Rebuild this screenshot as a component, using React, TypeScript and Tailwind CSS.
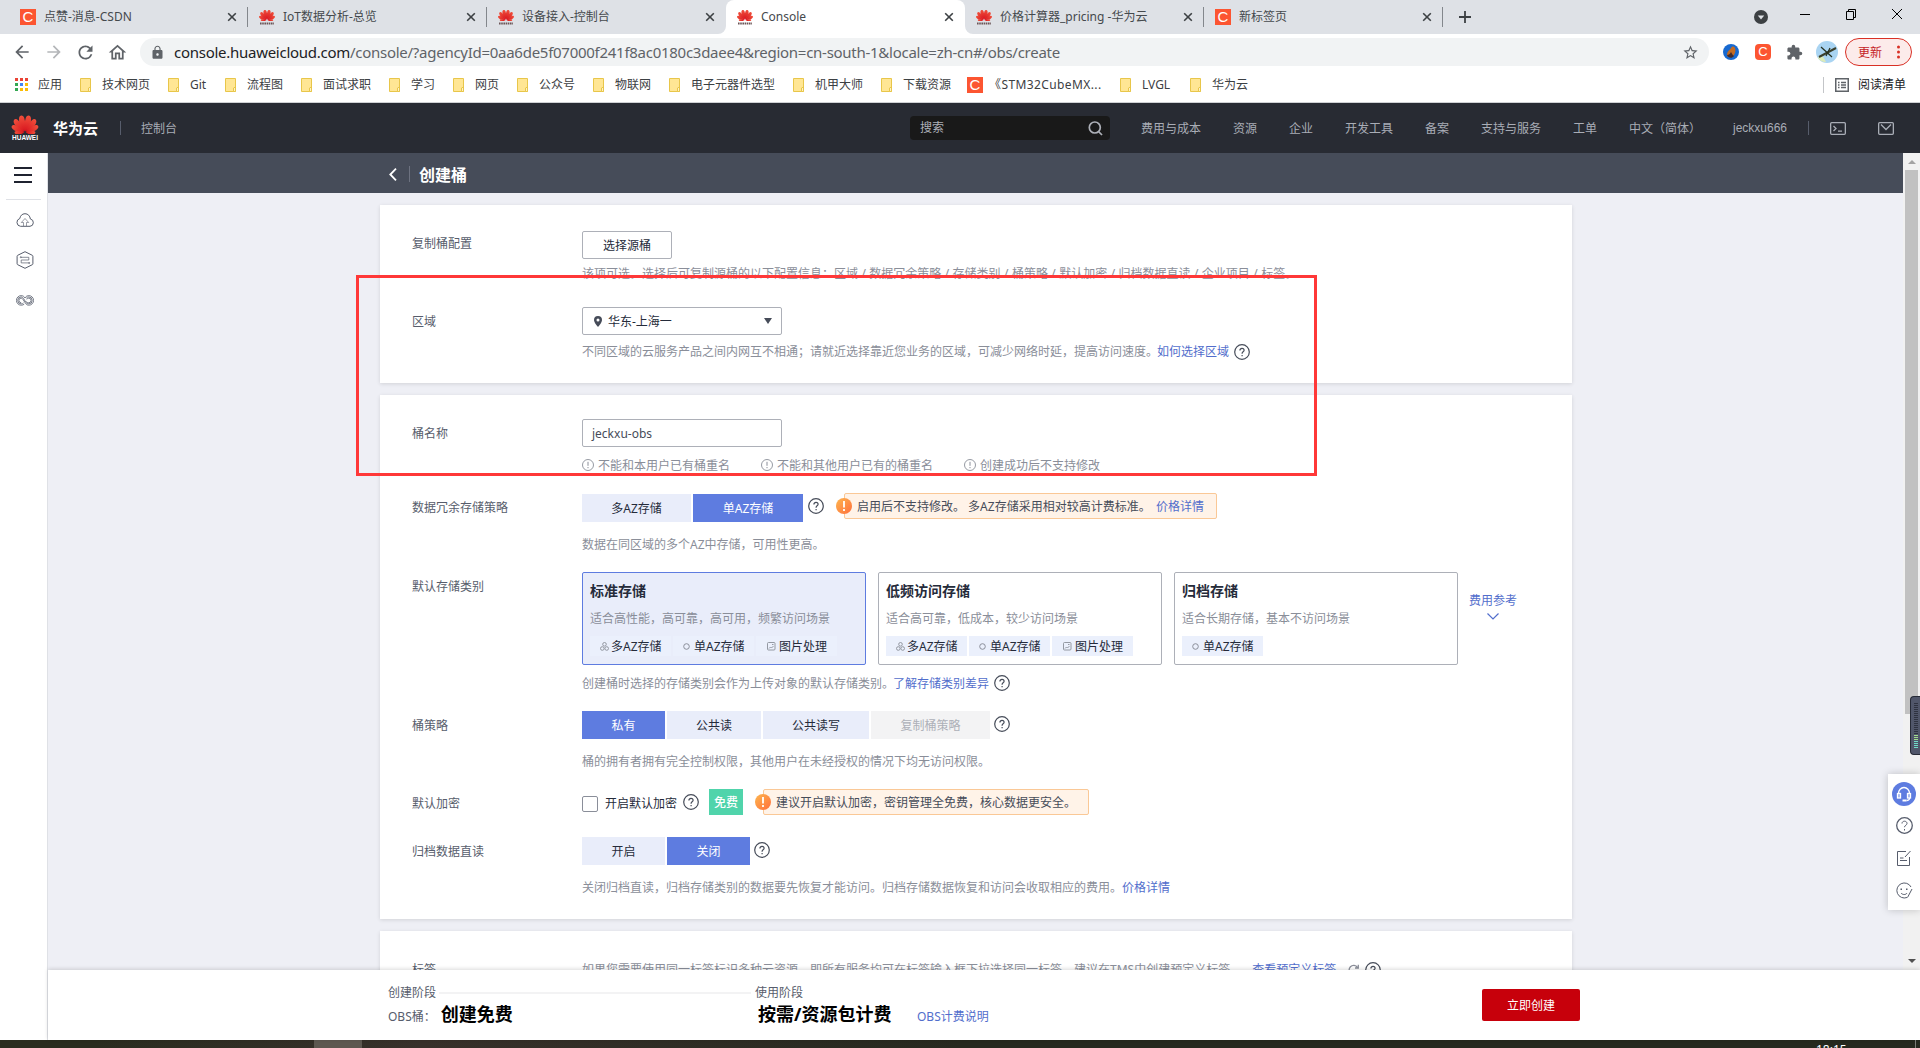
import React from 'react';
import clsx from 'clsx';
import {
  MdArrowBack,
  MdArrowForward,
  MdExtension,
  MdLock,
  MdOutlineHome,
  MdRefresh,
  MdStarBorder,
} from 'react-icons/md';

const tabs = [
  { title: '点赞-消息-CSDN', icon: 'csdn' },
  { title: 'IoT数据分析-总览', icon: 'huawei' },
  { title: '设备接入-控制台', icon: 'huawei' },
  { title: 'Console', icon: 'huawei', active: true },
  { title: '价格计算器_pricing -华为云', icon: 'huawei' },
  { title: '新标签页', icon: 'csdn' },
];

const bookmarks = [
  { title: '技术网页', width: 'w-[48px]' },
  { title: 'Git', width: 'w-[17px]' },
  { title: '流程图', width: 'w-[36px]' },
  { title: '面试求职', width: 'w-[48px]' },
  { title: '学习', width: 'w-[24px]' },
  { title: '网页', width: 'w-[24px]' },
  { title: '公众号', width: 'w-[36px]' },
  { title: '物联网', width: 'w-[36px]' },
  { title: '电子元器件选型', width: 'w-[84px]' },
  { title: '机甲大师', width: 'w-[48px]' },
  { title: '下载资源', width: 'w-[46px]' },
  { title: '《STM32CubeMX...', width: 'w-[113px]', csdn: true },
  { title: 'LVGL', width: 'w-[30px]' },
  { title: '华为云', width: 'w-[36px]' },
];

const menu = ['费用与成本', '资源', '企业', '开发工具', '备案', '支持与服务', '工单', '中文（简体）'];

const storageClasses = [
  { title: '标准存储', desc: '适合高性能，高可靠，高可用，频繁访问场景', tags: ['multi', 'single', 'image'], active: true },
  { title: '低频访问存储', desc: '适合高可靠，低成本，较少访问场景', tags: ['multi', 'single', 'image'] },
  { title: '归档存储', desc: '适合长期存储，基本不访问场景', tags: ['single'] },
];

const petals = [
  { angle: 13, scale: 1 },
  { angle: 39, scale: 0.96 },
  { angle: 64, scale: 0.84 },
  { angle: 90, scale: 0.6 },
];

function HuaweiFlower({ className }: { className?: string }) {
  const petal = 'M0-1C-3.200-6-4.200-10.500-2.700-15C-1.800-18.200 1.900-18.400 2.500-14.500C3-10 1.500-5 0-1z';
  return (
    <svg className={clsx('shrink-0', className)} viewBox="0 0 30 20">
      <defs>
        <linearGradient id="petal" x1="0" y1="0" x2="0" y2="1">
          <stop offset="0" stopColor="#f0503c" />
          <stop offset="1" stopColor="#d8141e" />
        </linearGradient>
      </defs>
      {petals.map((p) => (
        <g key={p.angle} fill="url(#petal)">
          <path d={petal} transform={`translate(15 18.500) rotate(${-p.angle}) scale(${p.scale})`} />
          <path d={petal} transform={`translate(15 18.500) rotate(${p.angle}) scale(${-p.scale} ${p.scale})`} />
        </g>
      ))}
    </svg>
  );
}

function CsdnIcon() {
  return (
    <span className="flex h-4 w-4 shrink-0 items-center justify-center bg-[#fc5531] font-['Liberation_Sans'] text-[15px] leading-4 text-white">
      C
    </span>
  );
}

function HuaweiFavicon() {
  return (
    <span className="flex h-4 w-4 shrink-0 flex-col items-center">
      <HuaweiFlower className="h-[12px] w-[18px]" />
      <svg className="mt-px" width="14" height="3" viewBox="0 0 14 3">
        <path d="M0 1.500H14" stroke="#6b5557" strokeWidth="2" strokeDasharray="1.6 .6" />
      </svg>
    </span>
  );
}

function TabStrip() {
  return (
    <div className="flex h-[34px] shrink-0 bg-[#dee1e6] pl-[9px] text-[12px] text-[#45494d]">
      {tabs.map((tab, i) => (
        <div
          key={tab.title}
          className={clsx(
            'relative flex w-[239px] items-center pl-[11px]',
            tab.active && 'rounded-t-lg bg-white',
          )}
        >
          {tab.icon === 'csdn' ? <CsdnIcon /> : <HuaweiFavicon />}
          <span className="ml-2 flex-1 whitespace-nowrap leading-[36px]">{tab.title}</span>
          <svg className="mr-[11px]" width="10" height="10" viewBox="0 0 10 10" stroke="#3c4043" strokeWidth="1.6">
            <path d="M1.2 1.2l7.6 7.6M8.8 1.2L1.2 8.8" />
          </svg>
          {i !== 2 && i !== 3 && <span className="absolute right-0 top-[7px] h-5 w-px bg-[#83878c]" />}
          {tab.active && (
            <>
              <svg className="absolute -left-2 bottom-0" width="8" height="8" viewBox="0 0 8 8">
                <path d="M8 0v8H0a8 8 0 0 0 8-8z" fill="#fff" />
              </svg>
              <svg className="absolute -right-2 bottom-0" width="8" height="8" viewBox="0 0 8 8">
                <path d="M0 0v8h8a8 8 0 0 1-8-8z" fill="#fff" />
              </svg>
            </>
          )}
        </div>
      ))}
      <svg className="ml-4 mt-[11px]" width="12" height="12" viewBox="0 0 12 12" stroke="#3c4043" strokeWidth="1.8">
        <path d="M6 0v12M0 6h12" />
      </svg>
      <div className="ml-auto flex items-start text-black">
        <svg className="mr-8 mt-[10px]" width="14" height="14" viewBox="0 0 14 14">
          <circle cx="7" cy="7" r="7" fill="#3c4043" />
          <path d="M3.8 5.4h6.4L7 9.6z" fill="#dee1e6" />
        </svg>
        <svg className="mr-9 mt-[9px]" width="10" height="11" viewBox="0 0 10 11" stroke="currentColor">
          <path d="M0 5.5h10" />
        </svg>
        <svg className="mr-9 mt-[9px]" width="10" height="11" viewBox="0 0 10 11" fill="none" stroke="currentColor">
          <path d="M.5 2.5h7v8h-7zM2.5 2.500V.5h7v8h-2" />
        </svg>
        <svg className="mr-[18px] mt-[9px]" width="10" height="10" viewBox="0 0 10 10" stroke="currentColor">
          <path d="M0 0l10 10M10 0L0 10" />
        </svg>
      </div>
    </div>
  );
}

function Toolbar() {
  return (
    <div className="flex h-9 shrink-0 items-center bg-white pl-3 text-[#5f6368]">
      <MdArrowBack size={20} />
      <MdArrowForward size={20} className="ml-3 text-[#b4b6b9]" />
      <MdRefresh size={21} className="ml-[11px]" />
      <MdOutlineHome size={21} className="ml-[11px]" />
      <div className="ml-3 flex h-7 w-[1569px] items-center rounded-full bg-[#f1f3f4] pl-[10px] pr-[10px]">
        <MdLock size={15} />
        <span className="ml-[9px] flex-1 whitespace-nowrap text-[15px] tracking-[-0.27px]">
          <span className="text-[#202124]">console.huaweicloud.com</span>
          /console/?agencyId=0aa6de5f07000f241f8ac0180c3daee4&amp;region=cn-south-1&amp;locale=zh-cn#/obs/create
        </span>
        <MdStarBorder size={17} />
      </div>
      <svg className="ml-[14px]" width="16" height="16" viewBox="0 0 16 16">
        <circle cx="8" cy="8" r="8" fill="#1769d0" />
        <path d="M4 11C4 7 7 6 8 4c1-2 3-2 4 0 1 3 0 5-1 7-2 3-6 3-7 0z" fill="#c46b22" />
        <path d="M4 11c2 0 3-1 4-3 1 2 2 3 3 4-2 3-6 2-7-1z" fill="#472c2a" />
      </svg>
      <span className="ml-4 flex h-4 w-4 items-center justify-center rounded-sm bg-[#fc5531] font-['Liberation_Sans'] text-[13px] leading-4 text-white">
        C
      </span>
      <MdExtension size={17} className="ml-[15px]" />
      <svg className="ml-[13px]" width="22" height="22" viewBox="0 0 22 22">
        <circle cx="11" cy="11" r="11" fill="#a9d4f2" />
        <path d="M2 17c3-6 6 0 8 4-4 0-7-2-8-4z" fill="#dcebb8" />
        <path d="M3 16L20 7" stroke="#3a3f2c" strokeWidth="2" />
        <path d="M5 6l11 10M10 15l4-8" stroke="#25301f" strokeWidth="1.200" />
      </svg>
      <div className="ml-[7px] flex h-7 w-[67px] items-center rounded-full border border-[#d93025] bg-[#fcebea] pl-3 text-[12px] text-[#c5221f]">
        <span className="mt-px">更新</span>
        <svg className="ml-[15px]" width="3" height="14" viewBox="0 0 3 14" fill="#d93025">
          <circle cx="1.500" cy="2" r="1.5" />
          <circle cx="1.500" cy="7" r="1.5" />
          <circle cx="1.500" cy="12" r="1.5" />
        </svg>
      </div>
    </div>
  );
}

function AppsIcon() {
  const colors = ['#ea4335', '#ea4335', '#ea4335', '#34a853', '#4285f4', '#fbbc04', '#34a853', '#fbbc04', '#fbbc04'];
  return (
    <svg width="13" height="13" viewBox="0 0 13 13">
      {colors.map((color, i) => (
        <rect key={i} x={(i % 3) * 5} y={Math.floor(i / 3) * 5} width="3" height="3" fill={color} />
      ))}
    </svg>
  );
}

function BookmarksBar() {
  return (
    <div className="flex h-[33px] shrink-0 items-center border-b border-[#cfd1d4] bg-white pb-[3px] pl-[15px] text-[12px] text-[#3c4043]">
      <AppsIcon />
      <span className="ml-[10px] w-[42px]">应用</span>
      {bookmarks.map((b) => (
        <div key={b.title} className="flex items-center">
          {b.csdn ? (
            <CsdnIcon />
          ) : (
            <svg width="11" height="14" viewBox="0 0 11 14">
              <path d="M.5.500h10v13H.5z" fill="#ffe694" stroke="#e8c64a" />
              <path d="M8.500 13.500v-3.500l2-1v4.500z" fill="#fff3c4" stroke="#e8c64a" />
            </svg>
          )}
          <span className={clsx('mr-[18px] whitespace-nowrap', b.csdn ? 'ml-[6px] tracking-[0.4px]' : 'ml-[11px]', b.width)}>
            {b.title}
          </span>
        </div>
      ))}
      <div className="ml-auto flex items-center pr-[14px]">
        <span className="h-4 w-px bg-[#c3c5c8]" />
        <svg className="ml-[11px] mr-[9px]" width="14" height="14" viewBox="0 0 14 14" fill="none" stroke="#5f6368">
          <rect x=".75" y=".75" width="12.5" height="12.5" strokeWidth="1.5" />
          <path d="M3 4.500h1.500M3 7h1.500M3 9.500h1.500M6 4.500h5M6 7h5M6 9.500h5" strokeWidth="1.300" />
        </svg>
        <span className="text-[#202124]">阅读清单</span>
      </div>
    </div>
  );
}

function ConsoleHeader() {
  return (
    <div className="flex h-[50px] shrink-0 items-center bg-[#282b33] pl-3 text-[12px] text-[#a9adb6]">
      <div className="flex w-[26px] flex-col items-center">
        <HuaweiFlower className="h-[20px] w-[30px]" />
        <span className="font-['Liberation_Sans'] text-[6.500px] font-bold leading-[8px] text-white">HUAWEI</span>
      </div>
      <span className="ml-[15px] text-[15px] font-bold text-white">华为云</span>
      <span className="ml-[22px] h-[14px] w-px bg-[#575d6c]" />
      <span className="ml-5 mt-px">控制台</span>
      <div className="ml-auto flex h-6 w-[200px] items-center justify-between rounded-sm bg-[#191919] pl-[10px] pr-[7px] text-[#adb0b8]">
        搜索
        <svg width="15" height="15" viewBox="0 0 15 15" fill="none" stroke="currentColor" strokeWidth="1.700">
          <circle cx="6.800" cy="6.500" r="5.500" />
          <path d="M10.500 10.500l3.500 3.500" />
        </svg>
      </div>
      <nav className="ml-[31px] mt-[2px] flex gap-8 whitespace-nowrap">
        {menu.map((m) => (
          <span key={m}>{m}</span>
        ))}
        <span className="w-[54px] font-['Liberation_Sans'] leading-[16px]">jeckxu666</span>
      </nav>
      <span className="ml-[21px] mr-[21px] h-[14px] w-px bg-[#575d6c]" />
      <svg className="mr-8" width="16" height="13" viewBox="0 0 16 13" fill="none" stroke="currentColor" strokeWidth="1.300">
        <rect x=".65" y=".65" width="14.700" height="11.700" rx="1" />
        <path d="M3.500 4l2.500 2.500L3.500 9M8 9.200h4" />
      </svg>
      <svg className="mr-[26px]" width="16" height="13" viewBox="0 0 16 13" fill="none" stroke="currentColor" strokeWidth="1.300">
        <rect x=".65" y=".65" width="14.700" height="11.700" rx="1" />
        <path d="M3 2.500l5 5 5-5" />
      </svg>
    </div>
  );
}

function Sidebar() {
  return (
    <aside className="flex w-12 shrink-0 flex-col border-r border-[#dfe1e6] bg-white">
      <svg className="ml-[14px] mt-[14px]" width="18" height="16" viewBox="0 0 18 16" stroke="#1f2330" strokeWidth="2">
        <path d="M0 1h18M0 8h18M0 15h18" />
      </svg>
      <span className="ml-[6px] mt-4 h-px w-[35px] bg-[#dfe1e6]" />
      <svg className="ml-4 mt-[13px]" width="18" height="14" viewBox="0 0 18 14" fill="none" stroke="#575d6c">
        <path d="M4.500 13.300h9.500a3.700 3.700 0 0 0 .4-7.300C14 3 12 .700 9 .700S4.200 3 3.800 5.500a4 4 0 0 0 .7 7.800z" />
        <path d="M7.500 13V9.500H5.300L9 5.500l3.700 4h-2.200V13" strokeWidth=".6" />
      </svg>
      <svg className="ml-4 mt-6" width="18" height="18" viewBox="0 0 18 18" fill="none" stroke="#575d6c">
        <path d="M9 .700l7.300 3.600a1 1 0 0 1 .6.9v7.600a1 1 0 0 1-.6.900L9 17.300l-7.300-3.600a1 1 0 0 1-.6-.9V5.200a1 1 0 0 1 .6-.9z" />
        <path d="M4.500 6.300h8.300v2.700H5.200v2.900h8.300" strokeWidth=".7" />
        <circle cx="4.800" cy="6.200" r=".6" strokeWidth=".6" />
        <circle cx="13.200" cy="12" r=".6" strokeWidth=".6" />
      </svg>
      <svg className="ml-4 mt-[26px]" width="18" height="11" viewBox="0 0 18 11" fill="none" stroke="#575d6c" strokeWidth=".8">
        <path d="M9 3C8 1.300 6.800.600 5.200.600a4.700 4.700 0 1 0 0 9.600c1.300 0 2.300-.4 3-1M9 3c1-1.700 2.200-2.400 3.800-2.400a4.700 4.700 0 1 1 0 9.600c-2 0-3-1.200-4-3L7 4.500c-.5-.8-1-1.400-1.800-1.400a2.300 2.300 0 1 0 0 4.600" />
        <path d="M10 7.500L7.700 3.700C7 2.600 6.300 1.900 5.200 1.900a3.500 3.500 0 1 0 0 7c1 0 1.800-.4 2.300-1M10.500 6.500c.6 1 1.200 1.300 2.200 1.300a2.300 2.300 0 1 0 0-4.700c-1 0-1.500.7-1.900 1.300M10.300 3.200c.7-.8 1.300-1.300 2.400-1.300a3.500 3.500 0 1 1 0 7c-1.200 0-2-.5-2.700-1.400" />
      </svg>
    </aside>
  );
}

function Help({ className }: { className?: string }) {
  return (
    <svg className={clsx('shrink-0', className)} width="16" height="16" viewBox="0 0 16 16" fill="none" stroke="#464c59" strokeWidth="1.200">
      <circle cx="8" cy="8" r="7.300" />
      <path d="M5.900 6.500c0-1.300.9-2.100 2.100-2.100s2.100.8 2.100 1.900c0 1.400-2 1.600-2 3.100v.4M8.100 11v1.300" />
    </svg>
  );
}

function Row({
  label,
  className,
  labelClass = 'leading-[29px]',
  children,
}: {
  label: string;
  className: string;
  labelClass?: string;
  children: React.ReactNode;
}) {
  return (
    <div className={clsx('flex whitespace-nowrap', className)}>
      <div className={clsx('w-[170px] shrink-0 text-[#575d6c]', labelClass)}>{label}</div>
      <div className="min-w-0 flex-1">{children}</div>
    </div>
  );
}

function Segment({ width, state, children }: { width: string; state?: 'on' | 'off'; children: React.ReactNode }) {
  return (
    <span
      className={clsx(
        'h-7 text-center leading-[29px]',
        width,
        state === 'on' && 'bg-[#5e7ce0] text-white',
        state === 'off' && 'bg-[#f3f3f4] text-[#adb0b8]',
        !state && 'bg-[#e9edfa] text-[#252b3a]',
      )}
    >
      {children}
    </span>
  );
}

function Tip({ className, children }: { className?: string; children: React.ReactNode }) {
  return (
    <div className={clsx('relative h-[26px] rounded-xs border border-[#fac896] bg-[#fff3e8] pl-[12px] leading-[25px] text-[#464c59]', className)}>
      <svg className="absolute -left-[9px] top-1" width="16" height="16" viewBox="0 0 16 16">
        <defs>
          <linearGradient id="warn" x1="0" y1="0" x2="1" y2="1">
            <stop offset="0" stopColor="#fdb64f" />
            <stop offset="1" stopColor="#ff6f3c" />
          </linearGradient>
        </defs>
        <circle cx="8" cy="8" r="8" fill="url(#warn)" />
        <path d="M8 3v6.500M8 11v2" stroke="#fff" strokeWidth="1.800" />
      </svg>
      {children}
    </div>
  );
}

function Link({ children, className }: { children: React.ReactNode; className?: string }) {
  return <a className={clsx('text-[#526ecc]', className)}>{children}</a>;
}

function Notice({ children }: { children: string }) {
  return (
    <span className="mr-[31px] flex items-center">
      <svg className="mb-[3px] mr-1" width="12" height="12" viewBox="0 0 12 12" fill="none" stroke="#8a8e99">
        <circle cx="6" cy="6" r="5.500" strokeWidth=".9" />
        <path d="M6 2.800v4M6 8v1.200" />
      </svg>
      {children}
    </span>
  );
}

function StorageTag({ type }: { type: string }) {
  return (
    <span className="flex h-5 w-[81px] items-center bg-[#ebf0fc] pl-[10px] leading-[21px] text-[#252b3a]">
      {type === 'multi' && (
        <svg className="mr-[2px]" width="9" height="9" viewBox="0 0 9 9" fill="none" stroke="#8a8e99" strokeWidth=".9">
          <circle cx="4.500" cy="2.300" r="1.800" />
          <circle cx="2.300" cy="6.500" r="1.800" />
          <circle cx="6.700" cy="6.500" r="1.800" />
        </svg>
      )}
      {type === 'single' && (
        <svg className="mr-[4px]" width="7" height="7" viewBox="0 0 7 7" fill="none" stroke="#8a8e99">
          <circle cx="3.500" cy="3.500" r="2.800" />
        </svg>
      )}
      {type === 'image' && (
        <svg className="ml-px mr-[3px]" width="9" height="9" viewBox="0 0 9 9" fill="none" stroke="#8a8e99" strokeWidth=".9">
          <rect x=".5" y=".5" width="7.500" height="7.500" rx="1" />
          <path d="M2 6.500l1.500-1.500 1 1L6.500 4M5 2.500h1.500" />
        </svg>
      )}
      <span className="mt-px">{type === 'multi' ? '多AZ存储' : type === 'single' ? '单AZ存储' : '图片处理'}</span>
    </span>
  );
}

function BucketForm() {
  return (
    <div className="ml-[332px] mt-3 flex w-[1192px] flex-col gap-3 text-[12px]">
      <section className="h-[178px] bg-white pl-8 pt-[26px] shadow-[0_1px_4px_rgba(0,0,0,0.12)]">
        <Row label="复制桶配置" className="h-[76px]" labelClass="leading-[26px]">
          <button className="block h-7 w-[90px] rounded-xs border border-[#adb0b8] text-center leading-[27px] text-[#252b3a]">
            选择源桶
          </button>
          <p className="mt-[6px] leading-[18px] text-[#8a8e99] [word-spacing:0.3px]">
            该项可选。选择后可复制源桶的以下配置信息：区域 / 数据冗余策略 / 存储类别 / 桶策略 / 默认加密 / 归档数据直读 / 企业项目 / 标签。
          </p>
        </Row>
        <Row label="区域" className="h-[76px]">
          <div className="flex h-7 w-[200px] items-center rounded-xs border border-[#adb0b8] pl-[11px] pr-[9px] text-[#252b3a]">
            <svg className="mr-[6px]" width="8" height="11" viewBox="0 0 8 11">
              <path d="M4 0a4 4 0 0 0-4 4c0 2.700 4 7 4 7s4-4.300 4-7a4 4 0 0 0-4-4zm0 2.500a1.500 1.500 0 1 1 0 3 1.500 1.500 0 0 1 0-3z" fill="#464c59" />
            </svg>
            <span className="mt-[2px] flex-1">华东-上海一</span>
            <svg className="mb-px" width="8" height="6" viewBox="0 0 8 6">
              <path d="M0 0h8L4 6z" fill="#464c59" />
            </svg>
          </div>
          <p className="mt-[8px] flex items-center leading-[18px] text-[#8a8e99]">
            不同区域的云服务产品之间内网互不相通；请就近选择靠近您业务的区域，可减少网络时延，提高访问速度。
            <Link className="-ml-px">如何选择区域</Link>
            <Help className="mb-px ml-[5px]" />
          </p>
        </Row>
      </section>

      <section className="h-[524px] bg-white pl-8 pt-6 shadow-[0_1px_4px_rgba(0,0,0,0.12)]">
        <Row label="桶名称" className="h-[75px]">
          <div className="h-7 w-[200px] rounded-xs border border-[#adb0b8] pl-[9px] leading-[27px] text-[#464c59]">
            jeckxu-obs
          </div>
          <p className="mt-[10px] flex leading-[18px] text-[#8a8e99]">
            <Notice>不能和本用户已有桶重名</Notice>
            <Notice>不能和其他用户已有的桶重名</Notice>
            <Notice>创建成功后不支持修改</Notice>
          </p>
        </Row>
        <Row label="数据冗余存储策略" className="h-[78px]" labelClass="leading-[27px]">
          <div className="flex h-7 items-start gap-[2px]">
            <Segment width="w-[109px]">多AZ存储</Segment>
            <Segment width="w-[110px]" state="on">单AZ存储</Segment>
            <Help className="ml-[3px] mt-1" />
            <Tip className="-mt-px ml-[18px] w-[373px]">
              <span className="inline-block w-[299px]">启用后不支持修改。 多AZ存储采用相对较高计费标准。</span>
              <Link>价格详情</Link>
            </Tip>
          </div>
          <p className="mt-[14px] leading-[18px] text-[#8a8e99]">数据在同区域的多个AZ中存储，可用性更高。</p>
        </Row>
        <Row label="默认存储类别" className="h-[139px]">
          <div className="flex gap-3">
            {storageClasses.map((s) => (
              <div
                key={s.title}
                className={clsx(
                  'h-[93px] w-[284px] rounded-xs border pl-[7px] pt-[9px]',
                  s.active ? 'border-[#5e7ce0] bg-[#e9edfa]' : 'border-[#adb0b8]',
                )}
              >
                <h3 className="text-[14px] font-bold leading-[18px] text-[#252b3a]">{s.title}</h3>
                <p className="mt-[10px] leading-[18px] text-[#8a8e99]">{s.desc}</p>
                <div className="mt-[8px] flex gap-[2px]">
                  {s.tags.map((t) => (
                    <StorageTag key={t} type={t} />
                  ))}
                </div>
              </div>
            ))}
            <div className="-ml-px flex flex-col items-center pt-[20px] leading-[18px]">
              <Link>费用参考</Link>
              <svg className="mt-[3px]" width="12" height="7" viewBox="0 0 12 7" fill="none" stroke="#526ecc" strokeWidth="1.200">
                <path d="M.5.500L6 6l5.500-5.500" />
              </svg>
            </div>
          </div>
          <p className="mt-[10px] flex items-center leading-[18px] text-[#8a8e99]">
            创建桶时选择的存储类别会作为上传对象的默认存储类别。
            <Link className="-ml-px">了解存储类别差异</Link>
            <Help className="mb-[2px] ml-[5px]" />
          </p>
        </Row>
        <Row label="桶策略" className="h-[78px]">
          <div className="flex items-start gap-[2px]">
            <Segment width="w-[83px]" state="on">私有</Segment>
            <Segment width="w-[94px]">公共读</Segment>
            <Segment width="w-[106px]">公共读写</Segment>
            <Segment width="w-[119px]" state="off">复制桶策略</Segment>
            <Help className="ml-[2px] mt-[5px]" />
          </div>
          <p className="mt-[14px] leading-[18px] text-[#8a8e99]">桶的拥有者拥有完全控制权限，其他用户在未经授权的情况下均无访问权限。</p>
        </Row>
        <Row label="默认加密" className="h-[48px]">
          <div className="flex h-[26px] items-center">
            <span className="mt-1 h-4 w-4 rounded-xs border border-[#8a8e99] bg-white" />
            <span className="ml-[7px] mt-[4px] text-[#252b3a]">开启默认加密</span>
            <Help className="ml-[6px]" />
            <span className="ml-[10px] h-[26px] w-[34px] bg-[#50d4ab] text-center font-medium leading-[27px] text-white">免费</span>
            <Tip className="ml-5 w-[326px]">建议开启默认加密，密钥管理全免费，核心数据更安全。</Tip>
          </div>
        </Row>
        <Row label="归档数据直读" className="h-[82px]">
          <div className="flex items-start gap-[2px]">
            <Segment width="w-[83px]">开启</Segment>
            <Segment width="w-[83px]" state="on">关闭</Segment>
            <Help className="ml-[2px] mt-[5px]" />
          </div>
          <p className="mt-[14px] leading-[18px] text-[#8a8e99]">
            关闭归档直读，归档存储类别的数据要先恢复才能访问。归档存储数据恢复和访问会收取相应的费用。
            <Link>价格详情</Link>
          </p>
        </Row>
      </section>

      <section className="h-[120px] bg-white pl-8 pt-6 shadow-[0_1px_4px_rgba(0,0,0,0.12)]">
        <Row label="标签" className="h-8">
          <div className="flex items-center leading-[29px] text-[#8a8e99]">
            如果您需要使用同一标签标识多种云资源，即所有服务均可在标签输入框下拉选择同一标签，建议在TMS中创建预定义标签。
            <Link className="ml-[10px]">查看预定义标签</Link>
            <svg className="ml-3" width="11" height="12" viewBox="0 0 11 12" fill="none" stroke="#8a8e99" strokeWidth="1.300">
              <path d="M9.500 3.500A4.500 4.500 0 1 0 10 7M10.300.800v3.200H7" />
            </svg>
            <Help className="ml-[6px]" />
          </div>
        </Row>
      </section>
    </div>
  );
}

function Scrollbar() {
  return (
    <div className="flex w-[17px] shrink-0 flex-col items-center bg-[#f1f1f1]">
      <svg className="mt-[7px]" width="8" height="4" viewBox="0 0 8 4">
        <path d="M0 4h8L4 0z" fill="#a3a3a3" />
      </svg>
      <div className="mt-[6px] h-[544px] w-[13px] bg-[#c1c1c1]" />
      <svg className="mb-[7px] mt-auto" width="8" height="4" viewBox="0 0 8 4">
        <path d="M0 0h8L4 4z" fill="#505050" />
      </svg>
    </div>
  );
}

function Footer() {
  return (
    <footer className="relative flex h-[70px] shrink-0 bg-white pl-[340px] text-[12px] shadow-[0_-1px_4px_rgba(0,0,0,0.15)]">
      <div className="w-[367px] pt-[14px]">
        <div className="flex items-center leading-[18px] text-[#575d6c]">
          创建阶段
          <span className="ml-[3px] h-[2px] w-[312px] bg-[#f3f3f4]" />
        </div>
        <div className="-mt-px flex items-baseline leading-[27px] text-[#575d6c]">
          OBS桶：<strong className="ml-[5px] text-[18px] text-black">创建免费</strong>
        </div>
      </div>
      <div className="pt-[14px]">
        <div className="leading-[18px] text-[#575d6c]">使用阶段</div>
        <div className="-mt-px flex items-baseline pl-[3px] leading-[27px]">
          <strong className="w-[159px] text-[18px] text-black">按需/资源包计费</strong>
          <Link>OBS计费说明</Link>
        </div>
      </div>
      <button className="ml-auto mr-[340px] mt-[19px] h-8 w-[98px] rounded-xs bg-[#c7000b] pt-px text-white">立即创建</button>
    </footer>
  );
}

function ServicePanel() {
  return (
    <div className="absolute right-0 top-[774px] flex h-[136px] w-8 flex-col items-center bg-white pt-2 shadow-[0_0_8px_rgba(0,0,0,0.2)]">
      <svg width="24" height="24" viewBox="0 0 24 24" fill="none" stroke="#fff" strokeWidth="1.300">
        <circle cx="12" cy="12" r="12" fill="#5e7ce0" stroke="none" />
        <path d="M6.500 11.500a5.500 6 0 0 1 11 0M17.500 16c0 2-1.500 2.500-3 2.500" />
        <rect x="5.500" y="11.500" width="3" height="4.500" fill="#9db1ee" />
        <rect x="15.500" y="11.500" width="3" height="4.500" fill="#9db1ee" />
        <path d="M10.500 18.500h4" strokeWidth="2" />
      </svg>
      <svg className="mt-[11px]" width="17" height="17" viewBox="0 0 17 17" fill="none" stroke="#575d6c">
        <circle cx="8.500" cy="8.500" r="7.800" strokeWidth="1.300" />
        <path d="M6 6.500c0-1.300 1-2.300 2.500-2.300S11 5.200 11 6.500c0 1.700-2.500 1.800-2.500 3.700M8.500 12v1.500" />
      </svg>
      <svg className="mt-[16px]" width="16" height="17" viewBox="0 0 16 17" fill="none" stroke="#575d6c">
        <path d="M10 1.500H1.500v14h12V7M9 7l5.500-6M4 8h3.500M4 10.500h7" />
      </svg>
      <svg className="mt-[15px]" width="17" height="17" viewBox="0 0 17 17" fill="none" stroke="#575d6c">
        <path d="M15 5A7.500 7.500 0 1 0 11 15.500M16 7l-4.500 8.500M5 11c1.500 2 5 2 6 0" />
        <path d="M4.500 7.200h1.500M10 7.200h1.500" strokeWidth="1.500" />
      </svg>
    </div>
  );
}

function VolumeMeter() {
  return (
    <div className="absolute right-0 top-[696px] flex h-[59px] w-[10px] flex-col items-center gap-px rounded-l border border-r-0 border-[#262a36] bg-[#50566a] pt-[6px]">
      {Array.from({ length: 23 }, (_, i) => (
        <span key={i} className={clsx('h-px w-1 shrink-0', i < 16 ? 'bg-[#2e3240]' : i < 19 ? 'bg-[#a0dc8c]' : 'bg-[#6fdcc8]')} />
      ))}
    </div>
  );
}

export default function App() {
  return (
    <div className="relative flex h-[1048px] w-[1920px] flex-col overflow-hidden bg-white font-['Noto_Sans','Noto_Sans_CJK_SC',sans-serif]">
      <TabStrip />
      <Toolbar />
      <BookmarksBar />
      <ConsoleHeader />
      <div className="flex min-h-0 flex-1">
        <Sidebar />
        <div className="flex min-w-0 flex-1 flex-col">
          <div className="flex min-h-0 flex-1">
            <main className="min-w-0 flex-1 overflow-hidden bg-[#eeeff5]">
              <div className="flex h-10 items-center bg-[#464c59] pl-[341px] text-white">
                <svg className="mt-[2px]" width="8" height="13" viewBox="0 0 8 13" fill="none" stroke="currentColor" strokeWidth="1.800">
                  <path d="M7 .700L1.300 6.500 7 12.300" />
                </svg>
                <span className="ml-3 mt-[2px] h-4 w-px bg-[#6d7280]" />
                <h1 className="ml-[9px] mt-[3px] text-[16px] font-bold leading-6">创建桶</h1>
              </div>
              <BucketForm />
            </main>
            <Scrollbar />
          </div>
          <Footer />
        </div>
      </div>
      <div className="flex h-2 shrink-0 justify-between overflow-hidden bg-linear-to-r from-[#2a2c1f] from-5% via-[#37302a] via-22% to-[#26291f] to-50% pl-[314px]">
        <span className="h-2 w-12 bg-[#5d5850]" />
        <div className="flex h-2">
          <span className="w-[99px] pt-[3px] text-[12px] leading-[14px] text-white">18:15</span>
          <span className="mr-1 h-2 w-px bg-[#7c7d78]" />
        </div>
      </div>
      <div className="absolute left-[356px] top-[275px] h-[201px] w-[961px] border-[3px] border-[#ff3838]" />
      <VolumeMeter />
      <ServicePanel />
    </div>
  );
}
